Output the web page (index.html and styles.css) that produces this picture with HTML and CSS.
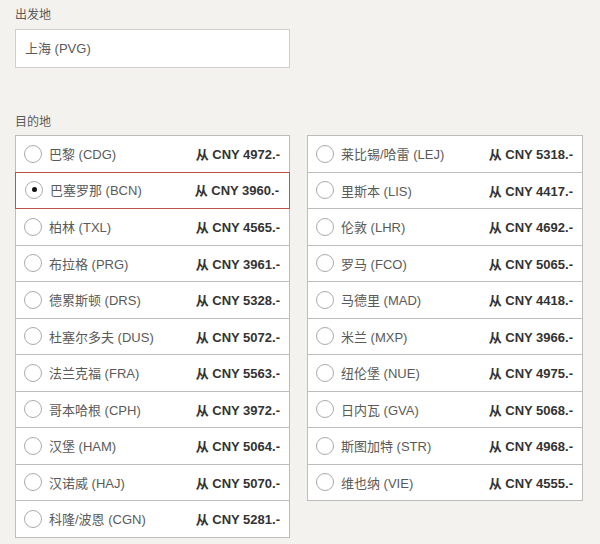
FILE: index.html
```html
<!DOCTYPE html>
<html lang="zh-CN">
<head>
<meta charset="utf-8">
<title>目的地</title>
<link rel="stylesheet" href="styles.css">
</head>
<body>
<div class="page">
  <div class="label">出发地</div>
  <div class="input">上海 (PVG)</div>

  <div class="label dest">目的地</div>
  <div class="cols">
    <div class="list">
      <div class="row"><span class="radio"></span><span class="name">巴黎 (CDG)</span><span class="price">从 CNY 4972.-</span></div>
      <div class="row sel"><span class="radio on"></span><span class="name">巴塞罗那 (BCN)</span><span class="price">从 CNY 3960.-</span></div>
      <div class="row"><span class="radio"></span><span class="name">柏林 (TXL)</span><span class="price">从 CNY 4565.-</span></div>
      <div class="row"><span class="radio"></span><span class="name">布拉格 (PRG)</span><span class="price">从 CNY 3961.-</span></div>
      <div class="row"><span class="radio"></span><span class="name">德累斯顿 (DRS)</span><span class="price">从 CNY 5328.-</span></div>
      <div class="row"><span class="radio"></span><span class="name">杜塞尔多夫 (DUS)</span><span class="price">从 CNY 5072.-</span></div>
      <div class="row"><span class="radio"></span><span class="name">法兰克福 (FRA)</span><span class="price">从 CNY 5563.-</span></div>
      <div class="row"><span class="radio"></span><span class="name">哥本哈根 (CPH)</span><span class="price">从 CNY 3972.-</span></div>
      <div class="row"><span class="radio"></span><span class="name">汉堡 (HAM)</span><span class="price">从 CNY 5064.-</span></div>
      <div class="row"><span class="radio"></span><span class="name">汉诺威 (HAJ)</span><span class="price">从 CNY 5070.-</span></div>
      <div class="row"><span class="radio"></span><span class="name">科隆/波恩 (CGN)</span><span class="price">从 CNY 5281.-</span></div>
    </div>
    <div class="list">
      <div class="row"><span class="radio"></span><span class="name">莱比锡/哈雷 (LEJ)</span><span class="price">从 CNY 5318.-</span></div>
      <div class="row"><span class="radio"></span><span class="name">里斯本 (LIS)</span><span class="price">从 CNY 4417.-</span></div>
      <div class="row"><span class="radio"></span><span class="name">伦敦 (LHR)</span><span class="price">从 CNY 4692.-</span></div>
      <div class="row"><span class="radio"></span><span class="name">罗马 (FCO)</span><span class="price">从 CNY 5065.-</span></div>
      <div class="row"><span class="radio"></span><span class="name">马德里 (MAD)</span><span class="price">从 CNY 4418.-</span></div>
      <div class="row"><span class="radio"></span><span class="name">米兰 (MXP)</span><span class="price">从 CNY 3966.-</span></div>
      <div class="row"><span class="radio"></span><span class="name">纽伦堡 (NUE)</span><span class="price">从 CNY 4975.-</span></div>
      <div class="row"><span class="radio"></span><span class="name">日内瓦 (GVA)</span><span class="price">从 CNY 5068.-</span></div>
      <div class="row"><span class="radio"></span><span class="name">斯图加特 (STR)</span><span class="price">从 CNY 4968.-</span></div>
      <div class="row"><span class="radio"></span><span class="name">维也纳 (VIE)</span><span class="price">从 CNY 4555.-</span></div>
    </div>
  </div>
</div>
</body>
</html>
```

FILE: styles.css
```css
html, body {
  margin: 0;
  padding: 0;
  background: #f3f2ef;
}
body {
  font-family: "Liberation Sans", "Noto Sans CJK SC", sans-serif;
  color: #5a5a5a;
  font-size: 13px;
}
.page {
  padding: 7px 15px 0 15px;
  height: 537px;
}
.label {
  font-size: 12px;
  line-height: 16px;
  color: #5a5a5a;
  height: 22px;
}
.label.dest {
  margin-top: 46px;
  height: 21px;
}
.input {
  width: 275px;
  height: 39px;
  box-sizing: border-box;
  background: #fff;
  border: 1px solid #cfcfcc;
  padding: 0 9px;
  line-height: 37px;
  color: #5a5a5a;
}
.cols {
  display: flex;
  gap: 17px;
  align-items: flex-start;
}
.list {
  width: 273px;
  background: #fff;
  border: 1px solid #bdbdbd;
  border-bottom: none;
}
.list + .list {
  width: 274px;
}
.row {
  height: 36.5px;
  box-sizing: border-box;
  border-bottom: 1px solid #bdbdbd;
  display: flex;
  align-items: center;
  padding: 0 9px 0 8px;
  position: relative;
}
.row.sel {
  border: 1px solid #c0504a;
  margin: -1px -1px 0 -1px;
  height: 37.5px;
  padding: 0 10px 1px 9px;
  z-index: 1;
}
.radio {
  width: 18px;
  height: 18px;
  box-sizing: border-box;
  border: 1px solid #ababab;
  border-radius: 50%;
  background: #fff;
  flex: none;
  display: flex;
  align-items: center;
  justify-content: center;
}
.radio.on::after {
  content: "";
  width: 5px;
  height: 5px;
  border-radius: 50%;
  background: #111;
}
.name {
  margin-left: 7px;
  color: #5a5a5a;
  flex: 1;
  white-space: nowrap;
}
.price {
  font-weight: bold;
  color: #333;
  white-space: nowrap;
}
```
